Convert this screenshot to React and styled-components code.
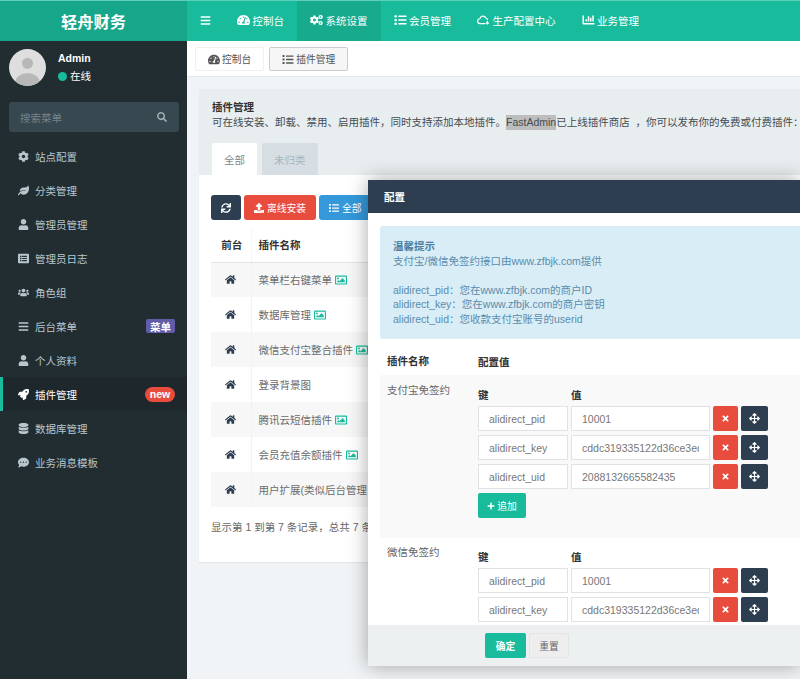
import styled, { createGlobalStyle } from 'styled-components';
import {
  FaBars, FaTachometerAlt, FaCogs, FaList, FaChartBar, FaSearch, FaCog, FaLeaf, FaUser,
  FaListAlt, FaUsers, FaRocket, FaDatabase, FaCommentDots, FaHome, FaRegImage, FaSync,
  FaUpload, FaTimes, FaArrowsAlt, FaPlus
} from 'react-icons/fa';

const GlobalStyle = createGlobalStyle`
  html, body { margin: 0; padding: 0; height: 100%; overflow: hidden; }
  * { box-sizing: border-box; }
  body {
    font-family: "Liberation Sans", "Noto Sans CJK SC", sans-serif;
    font-size: 10.5px;
    color: #444c50;
  }
`;

const CloudIcon = () => (
  <svg viewBox='0 0 20 14' fill='none' stroke='currentColor' strokeWidth='1.8'>
    <path d='M13 12.5H5a3.7 3.7 0 0 1-.6-7.4A4.8 4.8 0 0 1 13.6 4a3.2 3.2 0 0 1 2.6 3' />
    <path d='M16 8v5M13.8 11l2.2 2.2 2.2-2.2' />
  </svg>
);

const menu = [
  { icon: <FaCog />, label: '站点配置' },
  { icon: <FaLeaf />, label: '分类管理' },
  { icon: <FaUser />, label: '管理员管理' },
  { icon: <FaListAlt />, label: '管理员日志' },
  { icon: <FaUsers />, label: '角色组' },
  { icon: <FaBars />, label: '后台菜单', tag: '菜单' },
  { icon: <FaUser />, label: '个人资料' },
  { icon: <FaRocket />, label: '插件管理', badge: 'new', active: true },
  { icon: <FaDatabase />, label: '数据库管理' },
  { icon: <FaCommentDots />, label: '业务消息模板' }
];

const plugins = [
  { name: '菜单栏右键菜单', pic: true },
  { name: '数据库管理', pic: true },
  { name: '微信支付宝整合插件', pic: true },
  { name: '登录背景图' },
  { name: '腾讯云短信插件', pic: true },
  { name: '会员充值余额插件', pic: true },
  { name: '用户扩展(类似后台管理' }
];

const pairs = [
  ['alidirect_pid', '10001'],
  ['alidirect_key', 'cddc319335122d36ce3ed5d6'],
  ['alidirect_uid', '2088132665582435']
];

const KeyValues = ({ rows }) => (
  <>
    <KvHead>
      <KvHeadKey>键</KvHeadKey>
      <span>值</span>
    </KvHead>
    {rows.map(([k, v]) => (
      <KvRow key={k}>
        <KvKey readOnly value={k} />
        <KvValue readOnly value={v} />
        <SmallBtn $bg='#e74c3c'><FaTimes /></SmallBtn>
        <SmallBtn $bg='#2c3e50' $wide><FaArrowsAlt /></SmallBtn>
      </KvRow>
    ))}
  </>
);

export default function App() {
  return (
    <Page>
      <GlobalStyle />
      <Header>
        <Logo>轻舟财务</Logo>
        <TopNav>
          <Burger><FaBars /></Burger>
          <TopItem><FaTachometerAlt />控制台</TopItem>
          <TopItem $active><FaCogs />系统设置</TopItem>
          <TopItem><FaList />会员管理</TopItem>
          <TopItem><CloudIcon />生产配置中心</TopItem>
          <TopItem><FaChartBar />业务管理</TopItem>
        </TopNav>
      </Header>
      <Body>
        <Sidebar>
          <UserPanel>
            <Avatar>
              <svg viewBox='0 0 40 40'>
                <defs>
                  <clipPath id='face'><circle cx='20' cy='20' r='20' /></clipPath>
                </defs>
                <circle cx='20' cy='20' r='20' fill='#dedede' />
                <circle cx='20' cy='15.5' r='6' fill='#b8b8b8' />
                <ellipse cx='20' cy='36' rx='13' ry='10' fill='#b8b8b8' clipPath='url(#face)' />
              </svg>
            </Avatar>
            <UserInfo>
              <UserName>Admin</UserName>
              <Online><Dot />在线</Online>
            </UserInfo>
          </UserPanel>
          <SearchBox>
            搜索菜单
            <FaSearch />
          </SearchBox>
          {menu.map(m => (
            <MenuItem key={m.label} $active={m.active}>
              <MenuIcon>{m.icon}</MenuIcon>
              {m.label}
              {m.tag && <Tag>{m.tag}</Tag>}
              {m.badge && <Badge>{m.badge}</Badge>}
            </MenuItem>
          ))}
        </Sidebar>
        <Main>
          <TabBar>
            <PageTab><FaTachometerAlt />控制台</PageTab>
            <PageTab $active><FaList />插件管理</PageTab>
          </TabBar>
          <Content>
            <Panel>
              <PanelHead>
                <PanelTitle>插件管理</PanelTitle>
                <PanelDesc>
                  可在线安装、卸载、禁用、启用插件，同时支持添加本地插件。<Mark>FastAdmin</Mark>已上线插件商店&nbsp; ，你可以发布你的免费或付费插件：
                </PanelDesc>
                <Tabs>
                  <Tab $active>全部</Tab>
                  <Tab>未归类</Tab>
                </Tabs>
              </PanelHead>
              <PanelBody>
                <Toolbar>
                  <ToolBtn $bg='#2c3e50'><FaSync /></ToolBtn>
                  <ToolBtn $bg='#e74c3c'><FaUpload />离线安装</ToolBtn>
                  <ToolBtn $bg='#3498db'><FaList />全部</ToolBtn>
                </Toolbar>
                <Table>
                  <thead>
                    <tr>
                      <Th $narrow>前台</Th>
                      <Th>插件名称</Th>
                    </tr>
                  </thead>
                  <tbody>
                    {plugins.map(p => (
                      <tr key={p.name}>
                        <Td $center><FaHome /></Td>
                        <Td>{p.name}{p.pic && <Pic><FaRegImage /></Pic>}</Td>
                      </tr>
                    ))}
                  </tbody>
                </Table>
                <Summary>显示第 1 到第 7 条记录，总共 7 条记录</Summary>
              </PanelBody>
            </Panel>
          </Content>
        </Main>
      </Body>
      <Dialog>
        <DialogHead>配置</DialogHead>
        <DialogBody>
          <Alert>
            <strong>温馨提示</strong>
            <br />支付宝/微信免签约接口由www.zfbjk.com提供
            <br />
            <br />alidirect_pid：您在www.zfbjk.com的商户ID
            <br />alidirect_key：您在www.zfbjk.com的商户密钥
            <br />alidirect_uid：您收款支付宝账号的userid
          </Alert>
          <ConfigHead>
            <LabelCol>插件名称</LabelCol>
            <span>配置值</span>
          </ConfigHead>
          <ConfigRow $striped>
            <LabelCol>支付宝免签约</LabelCol>
            <div>
              <KeyValues rows={pairs} />
              <AddBtn><FaPlus />追加</AddBtn>
            </div>
          </ConfigRow>
          <ConfigRow>
            <LabelCol>微信免签约</LabelCol>
            <div>
              <KeyValues rows={pairs.slice(0, 2)} />
            </div>
          </ConfigRow>
        </DialogBody>
        <DialogFoot>
          <SubmitBtn>确定</SubmitBtn>
          <ResetBtn>重置</ResetBtn>
        </DialogFoot>
      </Dialog>
    </Page>
  );
}

const Page = styled.div`
  position: relative;
  width: 800px;
  height: 679px;
  overflow: hidden;
  display: flex;
  flex-direction: column;
  background: #f1f4f6;
`;

const Header = styled.header`
  display: flex;
  height: 41px;
  flex: none;
  background: #18bc9c;
  border-top: 1px solid #5fcfb9;
  color: #fff;
`;

const Logo = styled.div`
  width: 187px;
  background: #17a689;
  display: flex;
  align-items: center;
  justify-content: center;
  font-size: 16.25px;
  font-weight: 700;
`;

const TopNav = styled.nav`
  display: flex;
`;

const Burger = styled.div`
  width: 37px;
  padding: 0 0 2px 13px;
  display: flex;
  align-items: center;
  svg { width: 11px; height: 11px; }
`;

const TopItem = styled.div`
  display: flex;
  align-items: center;
  gap: 2.5px;
  padding: 0 13px 2px;
  background: ${p => (p.$active ? '#17aa8d' : 'transparent')};
  svg { width: 13px; height: 12px; }
`;

const Body = styled.div`
  flex: 1;
  display: flex;
  min-height: 0;
`;

const Sidebar = styled.aside`
  width: 187px;
  flex: none;
  background: #222d32;
  color: #b8c7ce;
`;

const UserPanel = styled.div`
  display: flex;
  align-items: flex-start;
  gap: 12px;
  padding: 8px 9px 0;
  height: 61px;
`;

const Avatar = styled.div`
  width: 37px;
  height: 37px;
  svg { width: 37px; height: 37px; display: block; }
`;

const UserInfo = styled.div`
  display: flex;
  flex-direction: column;
  gap: 4px;
  padding-top: 2px;
  color: #fff;
`;

const UserName = styled.div`
  font-weight: 700;
  line-height: 14px;
`;

const Online = styled.div`
  display: flex;
  align-items: center;
  gap: 3px;
  line-height: 14px;
`;

const Dot = styled.i`
  width: 9px;
  height: 9px;
  border-radius: 50%;
  background: #18bc9c;
`;

const SearchBox = styled.div`
  margin: 0 8px 7px 9px;
  height: 30px;
  padding: 0 12px 0 11px;
  border-radius: 3px;
  background: #374850;
  color: #75848b;
  display: flex;
  align-items: center;
  justify-content: space-between;
  svg { font-size: 10px; color: #a0adb3; }
`;

const MenuItem = styled.div`
  height: 34px;
  display: flex;
  align-items: center;
  padding: 0 12px 0 ${p => (p.$active ? '15px' : '18px')};
  border-left: ${p => (p.$active ? '3px solid #18bc9c' : 'none')};
  background: ${p => (p.$active ? '#1e282c' : 'transparent')};
  color: ${p => (p.$active ? '#fff' : '#b8c7ce')};
`;

const MenuIcon = styled.span`
  width: 17px;
  display: flex;
  svg { font-size: 11px; }
`;

const Tag = styled.span`
  margin-left: auto;
  width: 29px;
  height: 14px;
  display: flex;
  align-items: center;
  justify-content: center;
  background: #605ca8;
  color: #fff;
  font-weight: 700;
  border-radius: 2px;
`;

const Badge = styled.span`
  margin-left: auto;
  width: 30px;
  height: 15px;
  display: flex;
  align-items: center;
  justify-content: center;
  background: #e74c3c;
  color: #fff;
  font-weight: 700;
  border-radius: 8px;
`;

const Main = styled.main`
  flex: 1;
  min-width: 0;
`;

const TabBar = styled.div`
  height: 36px;
  background: #fff;
  border-bottom: 1px solid #e4e8ea;
  display: flex;
  gap: 5px;
  padding: 6px 8px 0;
`;

const PageTab = styled.div`
  height: 24px;
  display: flex;
  align-items: center;
  gap: 2px;
  padding: 0 12px;
  font-size: 9.75px;
  color: #555;
  border: 1px solid ${p => (p.$active ? '#ccc' : '#f0f0f0')};
  border-radius: 2px;
  background: ${p => (p.$active ? '#f6f6f6' : '#fff')};
  svg { width: 12px; height: 11px; }
`;

const Content = styled.div`
  padding: 12px 0 0 12px;
`;

const Panel = styled.section`
  width: 640px;
  background: #fff;
  height: 473px;
  box-shadow: 0 1px 1px rgba(0, 0, 0, 0.05);
`;

const PanelHead = styled.div`
  height: 86px;
  padding: 11px 0 0 13px;
  background: #e8edf0;
`;

const PanelTitle = styled.div`
  font-weight: 700;
  color: #333;
  line-height: 15px;
`;

const PanelDesc = styled.div`
  line-height: 15px;
  white-space: nowrap;
`;

const Mark = styled.span`
  display: inline-block;
  background: #bdbdbd;
`;

const Tabs = styled.div`
  display: flex;
  gap: 5px;
  margin-top: 13px;
`;

const Tab = styled.div`
  height: 32px;
  padding: 0 12px;
  display: flex;
  align-items: center;
  justify-content: center;
  border-radius: 2px 2px 0 0;
  background: ${p => (p.$active ? '#fff' : '#d6dee3')};
  color: ${p => (p.$active ? '#7b8a8b' : '#a8b4bb')};
`;

const PanelBody = styled.div`
  padding: 20px 0 0 12px;
`;

const Toolbar = styled.div`
  display: flex;
  gap: 3px;
  height: 25px;
`;

const ToolBtn = styled.div`
  display: flex;
  align-items: center;
  justify-content: center;
  gap: 3px;
  padding: 0 10px;
  min-width: 29px;
  border-radius: 3px;
  color: #fff;
  font-size: 9.75px;
  background: ${p => p.$bg};
  svg { font-size: 10px; }
`;

const Table = styled.table`
  width: 500px;
  margin-top: 8px;
  border-collapse: collapse;
  tbody tr:nth-child(odd) { background: #f7f7f7; }
`;

const Th = styled.th`
  height: 34px;
  text-align: ${p => (p.$narrow ? 'center' : 'left')};
  padding: ${p => (p.$narrow ? '0 6px 0 8px' : '0 7px')};
  color: #333;
  border-bottom: 1px solid #e4e4e4;
  border-right: 1px solid #f5f5f5;
  width: ${p => (p.$narrow ? '40px' : 'auto')};
`;

const Td = styled.td`
  height: 35px;
  padding: 0 7px;
  color: #6b6b6b;
  border-right: 1px solid #f2f2f2;
  white-space: nowrap;
  text-align: ${p => (p.$center ? 'center' : 'left')};
  svg { color: #2c3e50; font-size: 11px; vertical-align: -1px; }
`;

const Pic = styled.span`
  margin-left: 3px;
  svg { color: #18bc9c; font-size: 12px; vertical-align: -2px; }
`;

const Summary = styled.div`
  margin-top: 12px;
  white-space: nowrap;
  color: #666;
`;

const Dialog = styled.div`
  position: absolute;
  left: 368px;
  top: 180px;
  width: 432px;
  height: 486px;
  display: flex;
  flex-direction: column;
  background: #fff;
  box-shadow: 0 0 20px rgba(0, 0, 0, 0.35);
  border-radius: 2px 0 0 2px;
`;

const DialogHead = styled.div`
  height: 33px;
  flex: none;
  background: #2c3e50;
  color: #fff;
  font-weight: 700;
  display: flex;
  align-items: center;
  padding-left: 16px;
`;

const DialogBody = styled.div`
  flex: 1;
  min-height: 0;
  overflow: hidden;
  padding: 13px 0 0 12px;
`;

const Alert = styled.div`
  height: 113px;
  padding: 13px;
  border-radius: 3px 0 0 3px;
  background: #d9edf7;
  color: #5a8cab;
  line-height: 14.6px;
  strong { color: #4a80a4; }
`;

const ConfigHead = styled.div`
  display: grid;
  grid-template-columns: 98px 1fr;
  height: 36px;
  align-items: center;
  padding-top: 8px;
  font-weight: 700;
  color: #333;
`;

const LabelCol = styled.div`
  padding-left: 7px;
  line-height: 14px;
`;

const ConfigRow = styled.div`
  display: grid;
  grid-template-columns: 98px 1fr;
  background: ${p => (p.$striped ? '#f9f9f9' : '#fff')};
  padding: ${p => (p.$striped ? '8px 0 20px' : '7px 0 0')};
  color: #666;
`;

const KvHead = styled.div`
  display: flex;
  height: 23px;
  font-weight: 700;
  color: #333;
  align-items: center;
`;

const KvHeadKey = styled.span`
  width: 93px;
`;

const KvRow = styled.div`
  display: flex;
  gap: 3px;
  height: 29px;
`;

const KvKey = styled.input`
  width: 90px;
  height: 25px;
  border: 1px solid #dfe3e5;
  background: #fff;
  padding: 0 10px;
  font: inherit;
  color: #777;
  outline: none;
`;

const KvValue = styled(KvKey)`
  width: 139px;
`;

const SmallBtn = styled.div`
  width: ${p => (p.$wide ? '27px' : '25px')};
  height: 25px;
  border-radius: 2px;
  color: #fff;
  display: flex;
  align-items: center;
  justify-content: center;
  background: ${p => p.$bg};
  svg { font-size: ${p => (p.$wide ? '11px' : '9px')}; }
`;

const AddBtn = styled.div`
  width: 48px;
  height: 25px;
  border-radius: 2px;
  display: flex;
  align-items: center;
  justify-content: center;
  gap: 2px;
  background: #18bc9c;
  color: #fff;
  font-size: 9.75px;
  svg { font-size: 8px; }
`;

const DialogFoot = styled.div`
  height: 41px;
  flex: none;
  background: #ecf0f1;
  display: flex;
  align-items: center;
  gap: 3px;
  padding-left: 117px;
  font-size: 9.75px;
`;

const SubmitBtn = styled.div`
  width: 41px;
  height: 25px;
  border-radius: 2px;
  background: #18bc9c;
  color: #fff;
  font-weight: 700;
  display: flex;
  align-items: center;
  justify-content: center;
`;

const ResetBtn = styled.div`
  width: 40px;
  height: 25px;
  border-radius: 2px;
  background: #eee;
  border: 1px solid #e4e4e4;
  color: #666;
  display: flex;
  align-items: center;
  justify-content: center;
`;
